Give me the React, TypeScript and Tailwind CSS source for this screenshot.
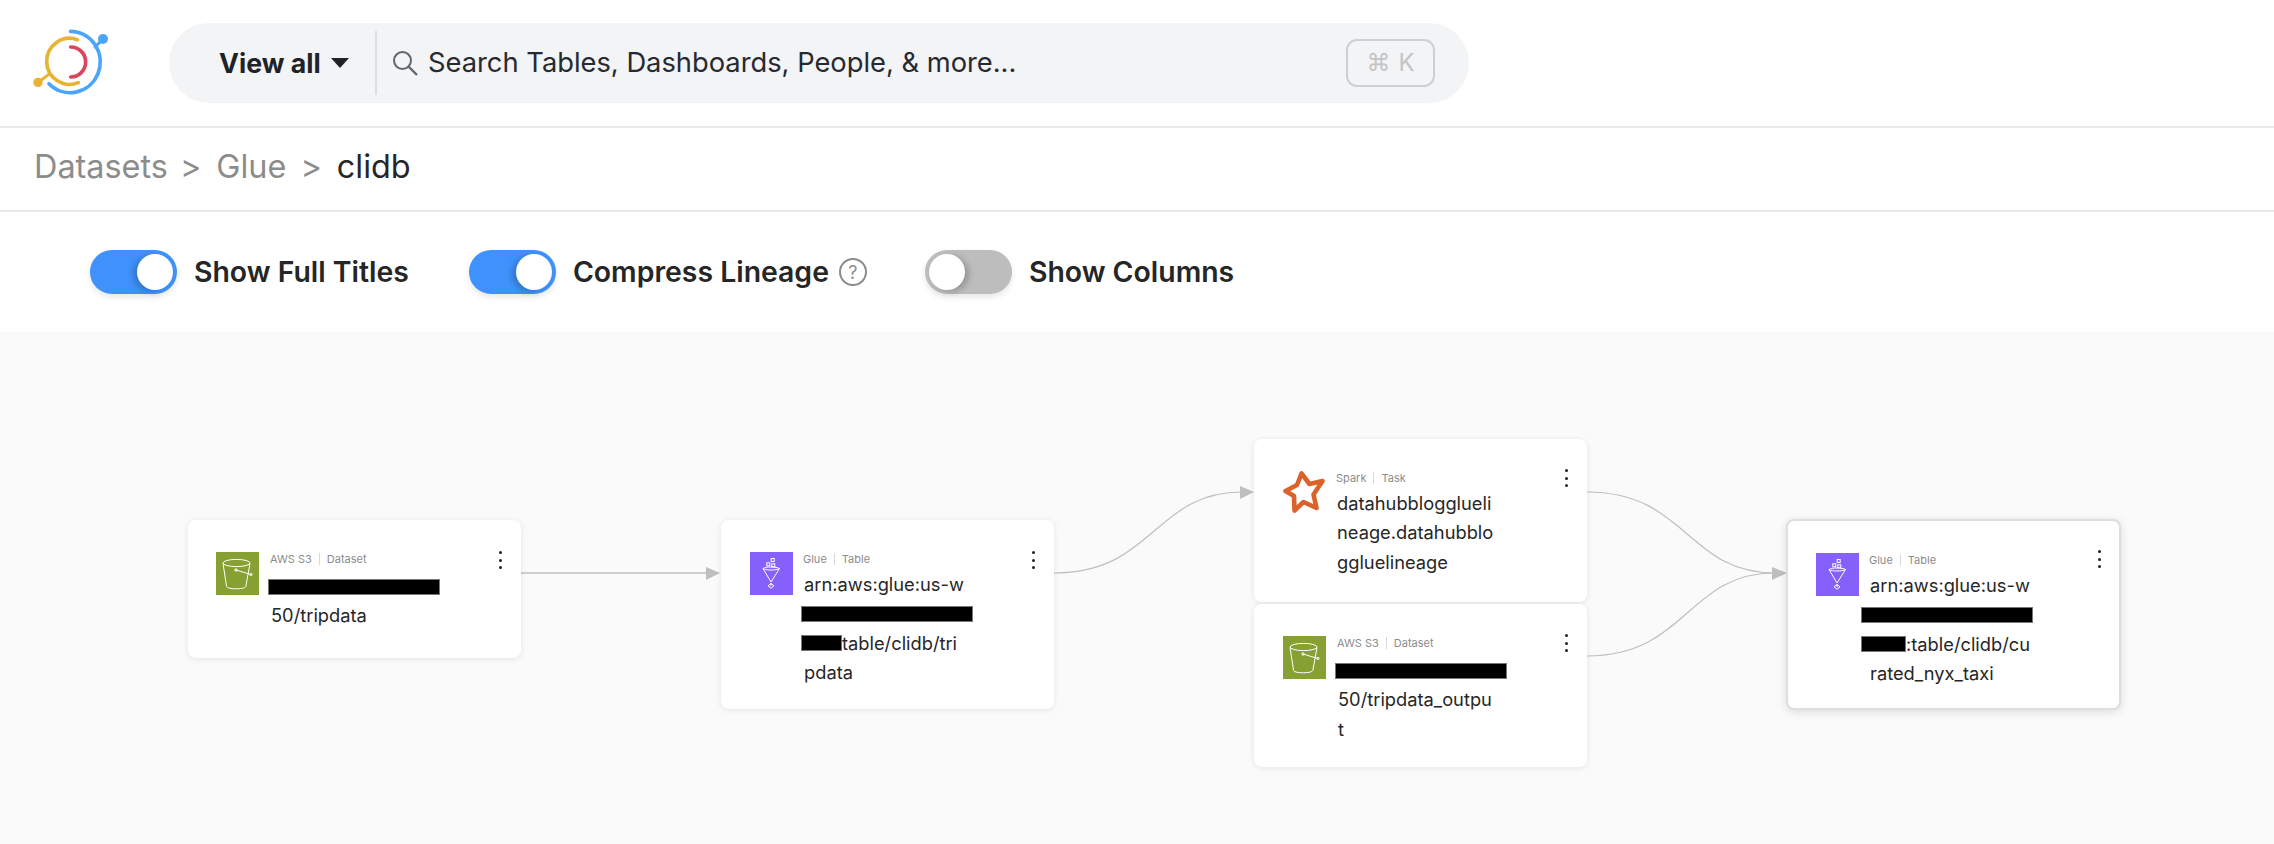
import React from "react";

function Logo() {
  return (
    <svg viewBox="0 0 330 300" className="w-[110px] h-[100px] shrink-0" fill="none" strokeLinecap="round">
      <path d="M155 55 A90 92 0 1 1 90 212" stroke="#4aa5fb" strokeWidth="11" />
      <path d="M228 102 L245 85" stroke="#4aa5fb" strokeWidth="9" />
      <circle cx="252" cy="78" r="15" fill="#4aa5fb" />
      <path d="M175 80 A69 69 0 1 0 178 209" stroke="#eab233" strokeWidth="11" />
      <path d="M92 182 L62 205" stroke="#eab233" strokeWidth="9" />
      <circle cx="57" cy="208" r="14" fill="#eab233" />
      <path d="M155 102 A45 45 0 0 1 155 192" stroke="#d8475c" strokeWidth="11" />
    </svg>
  );
}

function Bucket() {
  return (
    <div className="w-[43px] h-[43px] bg-[#86a031] shrink-0">
      <svg viewBox="0 0 43 43" className="w-[43px] h-[43px]" fill="none" stroke="#fff" strokeWidth="1">
        <ellipse cx="20.5" cy="11" rx="13.5" ry="3.6" />
        <path d="M7 11.5 L10.6 34.5 C11.5 37.6 29 37.6 29.8 34.5 L34 11.5" />
        <path d="M20 18 L34.5 22.4" />
        <circle cx="20" cy="18" r="1.2" />
        <ellipse cx="35" cy="22.5" rx="1.3" ry="0.9" />
      </svg>
    </div>
  );
}

function Funnel() {
  return (
    <div className="w-[43px] h-[43px] bg-[#8560fb] shrink-0">
      <svg viewBox="0 0 43 43" className="w-[43px] h-[43px]" fill="none" stroke="#fff" strokeWidth="1">
        <path d="M13 16.5 C16 18.5 26 18.5 29.5 16.5 C26 14.5 16 14.5 13 16.5 Z" />
        <path d="M13 16.5 L21 30 L29.5 16.5" />
        <rect x="21.2" y="6.5" width="3" height="3" />
        <rect x="16.8" y="10.8" width="3" height="3" />
        <rect x="21.8" y="11.8" width="3" height="3" />
        <path d="M21 31.5 L24 33.8 L21 36.2 L18 33.8 Z" />
        <path d="M21 31 V34" />
      </svg>
    </div>
  );
}

function Star() {
  return (
    <div className="w-[44px] h-[44px] -mt-[1px] shrink-0">
      <svg viewBox="0 0 44 44" className="w-[44px] h-[44px]" fill="#fff" stroke="#d9632a" strokeWidth="4.6" strokeLinejoin="round">
        <path d="M19.5 3.5 L27.5 14 L40.5 11 L31.5 24.5 L34.5 38 L21.5 32 L12.5 40.5 L12 26 L3.5 21 L15 15 Z" />
      </svg>
    </div>
  );
}

function Dots({ pos }: { pos: string }) {
  return (
    <div className={`absolute ${pos} flex flex-col gap-[4.6px]`}>
      <span className="w-[3px] h-[3px] rounded-full bg-[#222]" />
      <span className="w-[3px] h-[3px] rounded-full bg-[#222]" />
      <span className="w-[3px] h-[3px] rounded-full bg-[#222]" />
    </div>
  );
}

function Meta({ a, b }: { a: string; b: string }) {
  return (
    <div className="flex items-center h-[14px] -ml-[1px] text-[11px] leading-[14px] text-[#8c8c8c]">
      <span>{a}</span>
      <span className="w-px h-[12px] bg-[#d9d9d9] mx-[7px]" />
      <span>{b}</span>
    </div>
  );
}

function Line({ children }: { children: React.ReactNode }) {
  return <div className="h-[29.4px] leading-[29.4px] whitespace-nowrap flex items-center">{children}</div>;
}

function Bar({ cls }: { cls: string }) {
  return <span className={`${cls} h-[16px] bg-black shrink-0 border border-[#777]`} />;
}

function Toggle({ on }: { on: boolean }) {
  return on ? (
    <div className="w-[87px] h-[44px] rounded-full bg-[#3f92fb] flex items-center justify-end pr-[4px] shadow-[0_3px_6px_rgba(0,0,0,0.1)] shrink-0">
      <span className="w-[36px] h-[36px] rounded-full bg-white shadow-[-4px_2px_6px_rgba(0,0,0,0.2)]" />
    </div>
  ) : (
    <div className="w-[87px] h-[44px] rounded-full bg-[#bdbdbd] flex items-center pl-[4px] shadow-[0_3px_6px_rgba(0,0,0,0.1)] shrink-0">
      <span className="w-[36px] h-[36px] rounded-full bg-white shadow-[4px_2px_6px_rgba(0,0,0,0.2)]" />
    </div>
  );
}

const nodeBase =
  "absolute bg-white rounded-[8px] flex pt-[32px] text-[18.3px] text-[#262626] shadow-[0_1px_6px_rgba(0,0,0,0.09)]";

export default function App() {
  return (
    <div className="w-full h-[844px] flex flex-col bg-white overflow-hidden font-[Inter,sans-serif] text-[#1f2328]">
      <header className="h-[128px] shrink-0 border-b-2 border-[#e8e8e8] flex items-center pl-[19px] gap-[40px]">
        <Logo />
        <div className="w-[1300px] h-[80px] rounded-[40px] bg-[#f3f4f6] flex items-center pl-[50px] pr-[34px]">
          <span className="w-[104px] text-[26.7px] font-bold text-[#1f2328] whitespace-nowrap">View all</span>
          <svg viewBox="0 0 18 10" className="w-[18px] h-[10px] ml-[8px] shrink-0" fill="#1f2328">
            <path d="M0 0 H18 L9 10 Z" />
          </svg>
          <span className="w-[2px] h-[64px] bg-[#dcdee1] ml-[26px] shrink-0" />
          <svg viewBox="0 0 26 26" className="w-[26px] h-[26px] ml-[15px] shrink-0" fill="none" stroke="#5f6670" strokeWidth="2">
            <circle cx="10.5" cy="10.5" r="8.5" />
            <path d="M16.5 16.5 L25 25" strokeWidth="2.4" />
          </svg>
          <span className="ml-[10px] text-[27.3px] whitespace-nowrap text-[#262a30]">Search Tables, Dashboards, People, &amp; more...</span>
          <span className="ml-auto w-[89px] h-[48px] rounded-[11px] border-2 border-[#cfcfcf] flex items-center justify-center text-[24px] text-[#c4c4c4] gap-[8px] font-['DejaVu_Sans','Inter',sans-serif]">
            <span>⌘</span>
            <span className="font-[Inter,sans-serif]">K</span>
          </span>
        </div>
      </header>

      <nav className="h-[84px] shrink-0 border-b-2 border-[#e8e8e8] flex items-center pl-[34px] pb-[4px] text-[32.4px] text-[#8c8c8c]">
        <span>Datasets</span>
        <span className="ml-[12px]">&gt;</span>
        <span className="ml-[15px]">Glue</span>
        <span className="ml-[14px]">&gt;</span>
        <span className="ml-[15px] text-[#262626]">clidb</span>
      </nav>

      <div className="h-[120px] shrink-0 flex items-center pl-[90px] text-[28.4px] font-semibold text-[#262626]">
        <Toggle on />
        <span className="ml-[17px] whitespace-nowrap">Show Full Titles</span>
        <span className="ml-[60px]" />
        <Toggle on />
        <span className="ml-[17px] whitespace-nowrap">Compress Lineage</span>
        <span className="ml-[10px] w-[28px] h-[28px] rounded-full border-2 border-[#8c8c8c] flex items-center justify-center text-[18px] font-normal text-[#8c8c8c] shrink-0">?</span>
        <span className="ml-[58px]" />
        <Toggle on={false} />
        <span className="ml-[17px] whitespace-nowrap">Show Columns</span>
      </div>

      <main className="relative flex-1 bg-[#fafafa]">
        <svg className="absolute inset-0 w-full h-full" fill="none" stroke="#bfbfbf" strokeWidth="1.2">
          <path d="M520 241 H708" strokeWidth="1.5" />
          <path d="M1054 241 C1154 241 1154 160 1242 160" />
          <path d="M1587 160 C1687 160 1687 241 1775 241" />
          <path d="M1587 324 C1687 324 1687 241 1775 241" />
          <path d="M706 235 L720 241 L706 248 Z" fill="#bfbfbf" stroke="none" />
          <path d="M1240 154 L1254 160 L1240 167 Z" fill="#bfbfbf" stroke="none" />
          <path d="M1772 235 L1787 241 L1772 248 Z" fill="#bfbfbf" stroke="none" />
        </svg>

        <div className={`${nodeBase} left-[188px] top-[188px] w-[333px] h-[138px] pl-[28px]`}>
          <Bucket />
          <div className="ml-[12px]">
            <Meta a="AWS S3" b="Dataset" />
            <div className="mt-[6px]">
              <Line><Bar cls="w-[172px] -ml-[3px]" /></Line>
              <Line>50/tripdata</Line>
            </div>
          </div>
          <Dots pos="right-[19px] top-[31px]" />
        </div>

        <div className={`${nodeBase} left-[721px] top-[188px] w-[333px] h-[189px] pl-[29px]`}>
          <Funnel />
          <div className="ml-[11px]">
            <Meta a="Glue" b="Table" />
            <div className="mt-[4px]">
              <Line>arn:aws:glue:us-w</Line>
              <Line><Bar cls="w-[172px] -ml-[3px]" /></Line>
              <Line><Bar cls="w-[41px] -ml-[3px]" />table/clidb/tri</Line>
              <Line>pdata</Line>
            </div>
          </div>
          <Dots pos="right-[19px] top-[31px]" />
        </div>

        <div className={`${nodeBase} left-[1254px] top-[107px] w-[333px] h-[163px] pl-[28px]`}>
          <Star />
          <div className="ml-[11px]">
            <Meta a="Spark" b="Task" />
            <div className="mt-[4px]">
              <Line>datahubblogglueli</Line>
              <Line>neage.datahubblo</Line>
              <Line>ggluelineage</Line>
            </div>
          </div>
          <Dots pos="right-[19px] top-[30px]" />
        </div>

        <div className={`${nodeBase} left-[1254px] top-[272px] w-[333px] h-[163px] pl-[29px]`}>
          <Bucket />
          <div className="ml-[12px]">
            <Meta a="AWS S3" b="Dataset" />
            <div className="mt-[6px]">
              <Line><Bar cls="w-[172px] -ml-[3px]" /></Line>
              <Line>50/tripdata_outpu</Line>
              <Line>t</Line>
            </div>
          </div>
          <Dots pos="right-[19px] top-[30px]" />
        </div>

        <div className={`${nodeBase} left-[1786px] top-[187px] w-[335px] h-[191px] border-2 border-[#dedede] shadow-[0_2px_10px_rgba(0,0,0,0.12)] pl-[28px] pt-[31px]`}>
          <Funnel />
          <div className="ml-[11px]">
            <Meta a="Glue" b="Table" />
            <div className="mt-[4px]">
              <Line>arn:aws:glue:us-w</Line>
              <Line><Bar cls="w-[172px] -ml-[9px]" /></Line>
              <Line><Bar cls="w-[45px] -ml-[9px]" />:table/clidb/cu</Line>
              <Line>rated_nyx_taxi</Line>
            </div>
          </div>
          <Dots pos="right-[18px] top-[29px]" />
        </div>
      </main>
    </div>
  );
}
